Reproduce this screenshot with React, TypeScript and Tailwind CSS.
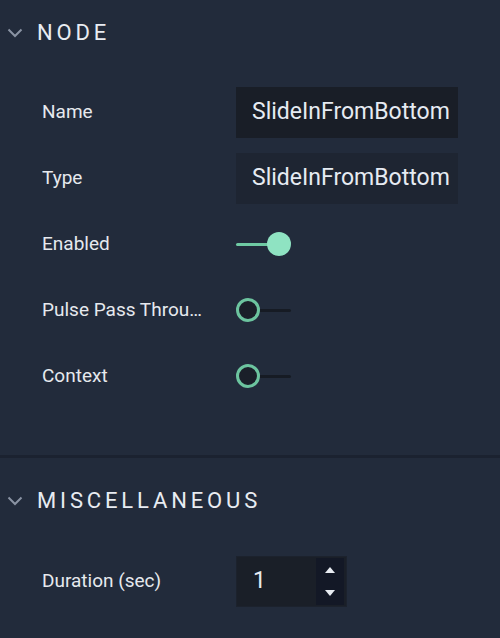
import React from "react";

function Chevron() {
  return (
    <svg width="16" height="10" viewBox="0 0 16 10" className="shrink-0">
      <path d="M1.5 1.5 L8 8 L14.5 1.5" fill="none" stroke="#8a93a3" strokeWidth="2" />
    </svg>
  );
}

function SectionHeader({ title }: { title: string }) {
  return (
    <div className="h-[66px] flex items-center pl-[7px]">
      <Chevron />
      <span className="ml-[14px] text-[22px] tracking-[0.175em] text-[#e8ecf2] leading-none">
        {title}
      </span>
    </div>
  );
}

function Row({ label, children }: { label: string; children: React.ReactNode }) {
  return (
    <div className="h-[66px] flex items-center pl-[42px] pr-[42px]">
      <div className="w-[164px] text-[19px] text-[#e6e9ee] truncate">{label}</div>
      <div className="ml-[30px] flex-1 flex items-center">{children}</div>
    </div>
  );
}

function TextBox({ value, dark }: { value: string; dark?: boolean }) {
  return (
    <div
      className={
        "w-[222px] h-[51px] flex items-center pl-4 text-[23px] text-[#e6ebf2] whitespace-nowrap overflow-hidden " +
        (dark ? "bg-[#191e27]" : "bg-[#1e2532]")
      }
    >
      {value}
    </div>
  );
}

function Toggle({ on }: { on: boolean }) {
  return (
    <div className="relative w-[55px] h-[24px] flex items-center">
      <div
        className={
          "absolute left-0 h-[3px] rounded-full " +
          (on ? "bg-[#6fcaa3] right-[12px]" : "bg-[#161b24] right-0")
        }
      />
      {on ? (
        <div className="absolute right-0 w-[24px] h-[24px] rounded-full bg-[#8fe3c2]" />
      ) : (
        <div className="absolute left-0 w-[24px] h-[24px] rounded-full bg-[#1a1f29] border-[3px] border-[#6cc49f]" />
      )}
    </div>
  );
}

function NumberBox({ value }: { value: string }) {
  return (
    <div className="w-[111px] h-[51px] flex bg-[#1a1f28] border border-[#1c222d]">
      <div className="flex-1 flex items-center pl-[16px] text-[23px] text-[#e6ebf2]">{value}</div>
      <div className="w-[28px] my-[1px] mr-[2px] bg-[#131826] flex flex-col items-center justify-center gap-[17px]">
        <svg width="10" height="6" viewBox="0 0 10 6">
          <path d="M0 6 L5 0 L10 6 Z" fill="#e8ecf2" />
        </svg>
        <svg width="10" height="6" viewBox="0 0 10 6">
          <path d="M0 0 L5 6 L10 0 Z" fill="#e8ecf2" />
        </svg>
      </div>
    </div>
  );
}

export default function App() {
  return (
    <div
      className="w-[500px] h-[638px] bg-[#222b3b] overflow-hidden"
      style={{ fontFamily: "Roboto, 'Noto Sans', sans-serif" }}
    >
      {/* Node */}
      <SectionHeader title="NODE" />
      <div className="pt-[13px] pb-[46px]">
        <Row label="Name">
          <TextBox value="SlideInFromBottom" dark />
        </Row>
        <Row label="Type">
          <TextBox value="SlideInFromBottom" />
        </Row>
        <Row label="Enabled">
          <Toggle on />
        </Row>
        <Row label="Pulse Pass Through">
          <Toggle on={false} />
        </Row>
        <Row label="Context">
          <Toggle on={false} />
        </Row>
      </div>

      <div className="h-[3px] bg-[#1b2230]" />

      {/* Miscellaneous */}
      <div className="pt-[10px]">
        <SectionHeader title="MISCELLANEOUS" />
        <div className="pt-[14px]">
          <Row label="Duration (sec)">
            <NumberBox value="1" />
          </Row>
        </div>
      </div>
    </div>
  );
}
